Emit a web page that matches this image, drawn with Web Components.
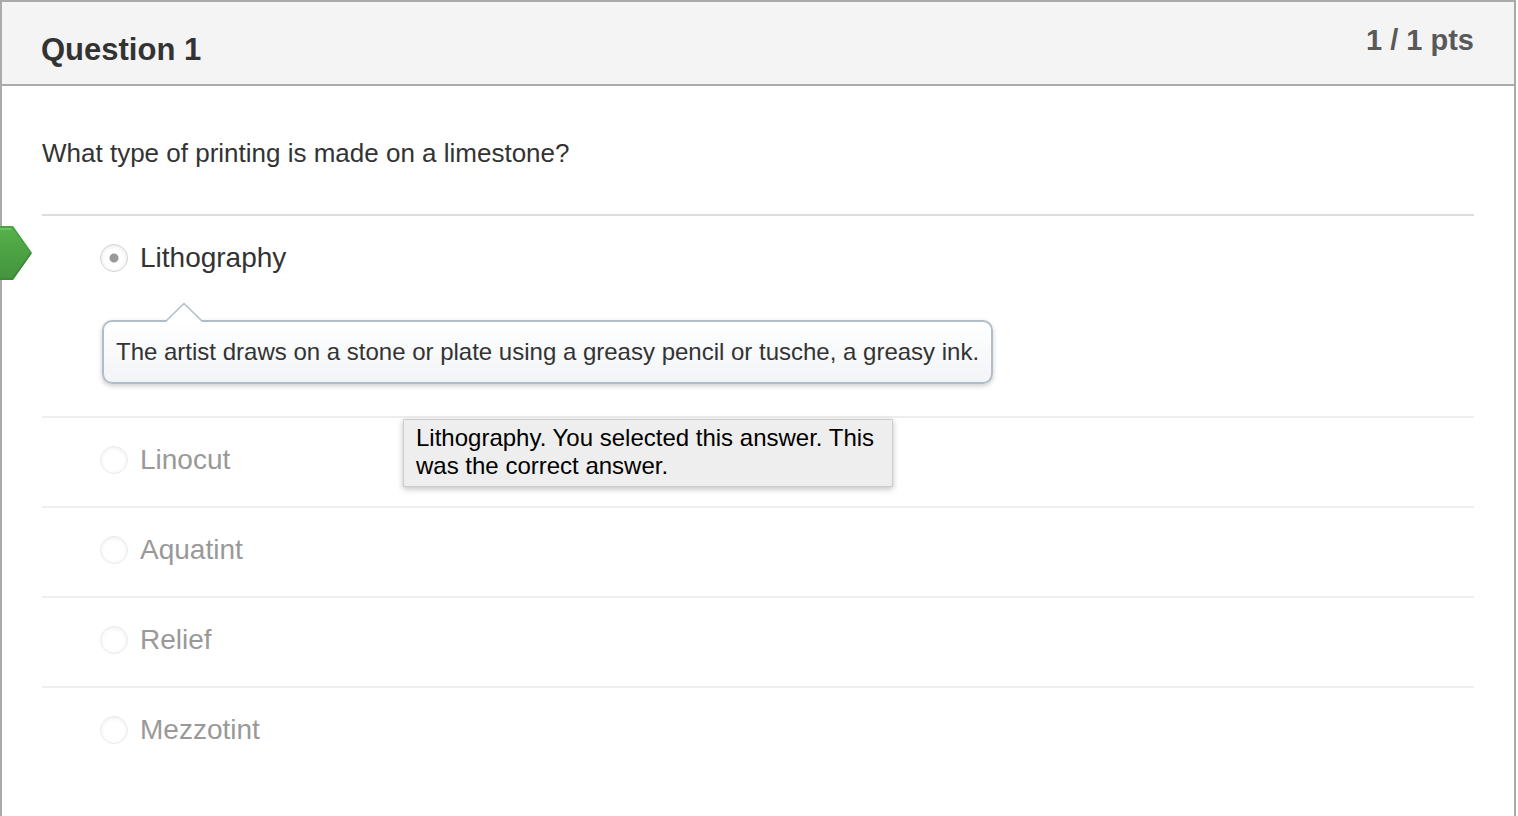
<!DOCTYPE html>
<html lang="en">
<head>
<meta charset="utf-8">
<title>Question 1</title>
<style>
  html, body { margin: 0; min-height: 100%; }
  html { height: 100%; }
  body {
    display: flex;
    min-height: 100vh;
    background: #fff;
    color: #333;
    font-family: "Liberation Sans", Arial, Helvetica, sans-serif;
  }
</style>
</head>
<body>
<quiz-question heading="Question 1" points="1 / 1 pts">
  <span slot="prompt">What type of printing is made on a limestone?</span>
  <quiz-answer label="Lithography" selected correct>
    <answer-comment>The artist draws on a stone or plate using a greasy pencil or tusche, a greasy ink.</answer-comment>
    <hover-tip slot="tip">Lithography. You selected this answer. This was the correct answer.</hover-tip>
  </quiz-answer>
  <quiz-answer label="Linocut"></quiz-answer>
  <quiz-answer label="Aquatint"></quiz-answer>
  <quiz-answer label="Relief"></quiz-answer>
  <quiz-answer label="Mezzotint"></quiz-answer>
</quiz-question>

<template id="question-template">
  <style>
    :host {
      display: flex;
      flex-direction: column;
      flex: 1;
      box-sizing: border-box;
      margin-right: 2px;
      border: 2px solid #aaa;
      border-bottom: 0;
    }
    header {
      display: flex;
      justify-content: space-between;
      align-items: flex-start;
      padding: 19px 40px 15px 39px;
      background: #f4f4f4;
      border-bottom: 2px solid #aaa;
    }
    h2 { margin: 0; padding-top: 10px; font-size: 31px; line-height: 38px; }
    .points { font-size: 29px; line-height: 38px; font-weight: bold; color: #595959; }
    .body { padding: 47px 40px 40px; }
    .prompt { margin: 0 0 41px; font-size: 26px; line-height: 40px; }
    fieldset { margin: 0; padding: 0; border: 0; min-width: 0; }
  </style>
  <header>
    <h2></h2>
    <span class="points"></span>
  </header>
  <div class="body">
    <p class="prompt"><slot name="prompt"></slot></p>
    <fieldset aria-label="Answers"><slot></slot></fieldset>
  </div>
</template>

<template id="answer-template">
  <style>
    :host {
      display: block;
      position: relative;
      border-top: 2px solid #eee;
      color: #999;
    }
    :host([selected]) { border-color: #ddd; color: #333; padding-bottom: 32px; }
    label {
      display: flex;
      align-items: center;
      gap: 12px;
      padding: 22px 58px 26px;
      font-size: 28px;
      line-height: 40px;
    }
    input {
      appearance: none;
      flex: none;
      width: 28px;
      height: 28px;
      margin: 0;
      border: 1px solid #eaeaea;
      border-radius: 50%;
      background: #fff;
      box-shadow: inset 0 1px 4px rgba(0, 0, 0, .07);
      opacity: 1;
    }
    input:checked {
      border-color: #d2d2d2;
      background: radial-gradient(circle, #999 0 4px, #9990 5px), #fff;
      box-shadow: inset 0 1px 4px rgba(0, 0, 0, .1);
    }
    .marker { display: none; }
    :host([correct]) .marker {
      display: block;
      position: absolute;
      left: -42px;
      top: 10px;
      width: 32px;
      height: 54px;
    }
  </style>
  <svg class="marker" viewBox="0 0 32 54" role="img" aria-label="Correct answer">
    <defs>
      <linearGradient id="green" x1="0" y1="0" x2="0" y2="1">
        <stop offset="0" stop-color="#56b14a"></stop>
        <stop offset="1" stop-color="#43933e"></stop>
      </linearGradient>
    </defs>
    <path d="M0 0H13L32 27L13 54H0Z" fill="url(#green)"></path>
    <path d="M0 1H12.500L31 27" fill="none" stroke="#46a03f" stroke-width="1.500"></path>
    <path d="M0 3H11.500" fill="none" stroke="#6cc263" stroke-width="2"></path>
    <path d="M31 27L12.500 53H0" fill="none" stroke="#3b8835" stroke-width="1.500"></path>
  </svg>
  <label><input type="radio" name="answer" disabled><span></span></label>
  <slot></slot>
  <slot name="tip"></slot>
</template>

<template id="comment-template">
  <style>
    :host {
      display: block;
      position: relative;
      box-sizing: border-box;
      width: fit-content;
      margin: 16px 60px 0;
      padding: 14px 12px;
      border: 2px solid #b1bdc9;
      border-radius: 10px;
      background: linear-gradient(#fff, #f2f4f7);
      box-shadow: 0 2px 5px rgba(0, 0, 0, .2);
      font-size: 24px;
      line-height: 32px;
    }
    svg { position: absolute; left: 61px; top: -20px; width: 40px; height: 21px; }
  </style>
  <svg viewBox="0 0 40 21" aria-hidden="true">
    <path d="M1 20L19 2L37 20V21H1Z" fill="#fff"></path>
    <path d="M1 19L19 1.500L37 19" fill="none" stroke="#b1bdc9" stroke-width="1.500"></path>
  </svg>
  <slot></slot>
</template>

<template id="tip-template">
  <style>
    :host {
      position: absolute;
      z-index: 1;
      left: 361px;
      top: 203px;
      box-sizing: border-box;
      width: 490px;
      padding: 4px 12px 6px;
      border: 1px solid #ccc;
      background: #eee;
      box-shadow: 0 2px 6px rgba(0, 0, 0, .25);
      color: #000;
      font-size: 24px;
      line-height: 28px;
    }
  </style>
  <slot></slot>
</template>

<script>
  const stamp = (host, id) => {
    const root = host.attachShadow({ mode: "open" });
    root.append(document.getElementById(id).content.cloneNode(true));
    return root;
  };

  customElements.define("quiz-question", class extends HTMLElement {
    connectedCallback() {
      if (this.shadowRoot) return;
      const root = stamp(this, "question-template");
      root.querySelector("h2").textContent = this.getAttribute("heading");
      root.querySelector(".points").textContent = this.getAttribute("points");
    }
  });

  customElements.define("quiz-answer", class extends HTMLElement {
    connectedCallback() {
      if (this.shadowRoot) return;
      const root = stamp(this, "answer-template");
      root.querySelector("label span").textContent = this.getAttribute("label");
      root.querySelector("input").checked = this.hasAttribute("selected");
    }
  });

  customElements.define("answer-comment", class extends HTMLElement {
    connectedCallback() {
      if (!this.shadowRoot) stamp(this, "comment-template");
    }
  });

  customElements.define("hover-tip", class extends HTMLElement {
    connectedCallback() {
      if (this.shadowRoot) return;
      stamp(this, "tip-template");
      this.setAttribute("role", "tooltip");
    }
  });
</script>
</body>
</html>
